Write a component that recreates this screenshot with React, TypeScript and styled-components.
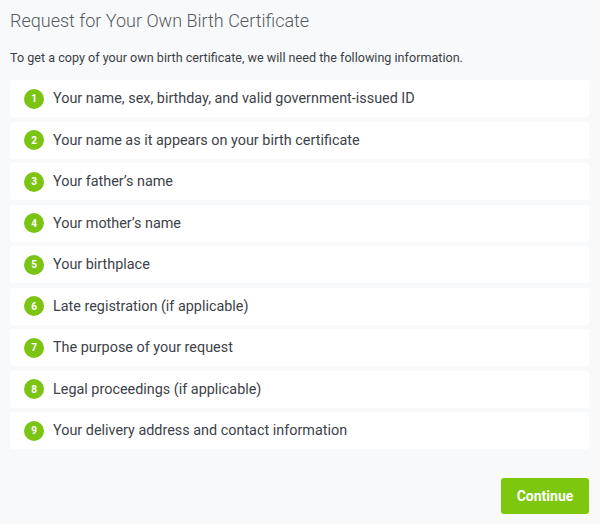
import React from "react";
import styled, { createGlobalStyle } from "styled-components";

const Global = createGlobalStyle`
  html, body { margin: 0; padding: 0; background: #f8f9fb; }
  body { font-family: Roboto, "Liberation Sans", sans-serif; }
`;

const Page = styled.div`
  width: 600px;
  height: 524px;
  box-sizing: border-box;
  padding: 9px 11px 0 10px;
  display: flex;
  flex-direction: column;
`;

const Title = styled.h1`
  margin: 0;
  font-weight: 300;
  font-size: 18px;
  line-height: 24px;
  color: #555a60;
`;

const Intro = styled.p`
  margin: 16px 0 0;
  font-size: 12.6px;
  line-height: 18px;
  color: #3a3f45;
`;

const List = styled.ol`
  list-style: none;
  margin: 13px 0 0;
  padding: 0;
  display: flex;
  flex-direction: column;
  gap: 4.5px;
`;

const Row = styled.li`
  height: 37px;
  background: #ffffff;
  border-radius: 3px;
  display: flex;
  align-items: center;
  padding-left: 14px;
  gap: 9px;
`;

const Badge = styled.span`
  width: 20px;
  height: 20px;
  border-radius: 50%;
  background: #7cc414;
  color: #fff;
  font-size: 10px;
  font-weight: 700;
  display: inline-flex;
  align-items: center;
  justify-content: center;
  flex: none;
`;

const Label = styled.span`
  font-size: 14.4px;
  color: #3d4249;
`;

const Footer = styled.div`
  display: flex;
  justify-content: flex-end;
  margin-top: 29px;
`;

const Button = styled.button`
  width: 88px;
  height: 36px;
  border: none;
  border-radius: 3px;
  background: #7ec70f;
  color: #fff;
  font-family: Roboto, "Liberation Sans", sans-serif;
  font-weight: 700;
  font-size: 14px;
  cursor: pointer;
`;

const items = [
  "Your name, sex, birthday, and valid government-issued ID",
  "Your name as it appears on your birth certificate",
  "Your father’s name",
  "Your mother’s name",
  "Your birthplace",
  "Late registration (if applicable)",
  "The purpose of your request",
  "Legal proceedings (if applicable)",
  "Your delivery address and contact information",
];

export default function App() {
  return (
    <>
      <Global />
      <Page>
        <Title>Request for Your Own Birth Certificate</Title>
        <Intro>To get a copy of your own birth certificate, we will need the following information.</Intro>
        <List>
          {items.map((t, i) => (
            <Row key={i}>
              <Badge>{i + 1}</Badge>
              <Label>{t}</Label>
            </Row>
          ))}
        </List>
        <Footer>
          <Button>Continue</Button>
        </Footer>
      </Page>
    </>
  );
}
